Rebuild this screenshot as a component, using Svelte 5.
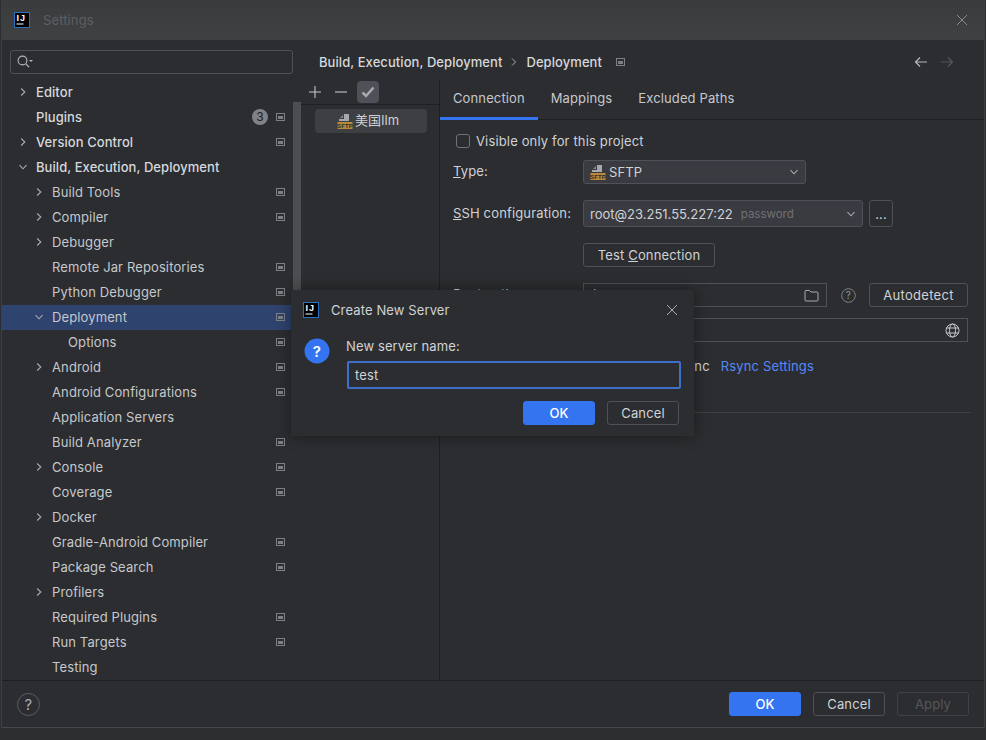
<script lang="ts">
  type Row = { label: string; level: number; arrow?: "right" | "down"; box?: boolean; strong?: boolean; badge?: string; selected?: boolean };

  const rows: Row[] = [
    { label: "Editor", level: 0, arrow: "right", strong: true },
    { label: "Plugins", level: 0, box: true, strong: true, badge: "3" },
    { label: "Version Control", level: 0, arrow: "right", box: true, strong: true },
    { label: "Build, Execution, Deployment", level: 0, arrow: "down", strong: true },
    { label: "Build Tools", level: 1, arrow: "right", box: true },
    { label: "Compiler", level: 1, arrow: "right", box: true },
    { label: "Debugger", level: 1, arrow: "right" },
    { label: "Remote Jar Repositories", level: 1, box: true },
    { label: "Python Debugger", level: 1, box: true },
    { label: "Deployment", level: 1, arrow: "down", box: true, selected: true },
    { label: "Options", level: 2, box: true },
    { label: "Android", level: 1, arrow: "right", box: true },
    { label: "Android Configurations", level: 1, box: true },
    { label: "Application Servers", level: 1 },
    { label: "Build Analyzer", level: 1, box: true },
    { label: "Console", level: 1, arrow: "right", box: true },
    { label: "Coverage", level: 1, box: true },
    { label: "Docker", level: 1, arrow: "right" },
    { label: "Gradle-Android Compiler", level: 1, box: true },
    { label: "Package Search", level: 1, box: true },
    { label: "Profilers", level: 1, arrow: "right" },
    { label: "Required Plugins", level: 1, box: true },
    { label: "Run Targets", level: 1, box: true },
    { label: "Testing", level: 1 }
  ];
  const tabs = ["Connection", "Mappings", "Excluded Paths"];
</script>

{#snippet logo()}
  <svg class="logo" width="16" height="16" viewBox="0 0 16 16">
    <rect x="0.5" y="0.5" width="15" height="15" fill="#000" stroke="#2f6fbf" />
    <text x="2.500" y="9" font-size="9" font-weight="700" letter-spacing="1" fill="#fff" font-family="Liberation Sans, sans-serif">IJ</text>
    <rect x="2.500" y="11.500" width="7" height="1" fill="#fff" />
  </svg>
{/snippet}

{#snippet boxIcon()}
  <svg class="box" width="9" height="8" viewBox="0 0 9 8">
    <rect x="0.5" y="0.5" width="8" height="7" fill="none" stroke="#7d8085" />
    <rect x="2" y="3" width="5" height="3" fill="#7d8085" />
  </svg>
{/snippet}

{#snippet chevron(dir: string)}
  <svg class="chev" width="10" height="10" viewBox="0 0 10 10">
    {#if dir === "down"}
      <path d="M1.5 3.2 5 6.8l3.5-3.6" fill="none" stroke="#a8abb0" stroke-width="1.1" />
    {:else}
      <path d="M3.2 1.5 6.8 5 3.2 8.5" fill="none" stroke="#a8abb0" stroke-width="1.1" />
    {/if}
  </svg>
{/snippet}

{#snippet sftp()}
  <svg width="16" height="16" viewBox="0 0 16 16" class="sftp">
    <path d="M7 1h5v7H2V6h5z" fill="#a6a8ac" />
    <path d="M3 5l3-3v3z" fill="#85878b" />
    <rect x="0.5" y="9" width="15" height="7" fill="#b98a3a" />
    <text x="8" y="15" font-size="6" font-weight="700" text-anchor="middle" fill="#2b2d30" font-family="Liberation Sans, sans-serif">SFTP</text>
  </svg>
{/snippet}

{#snippet close(color: string)}
  <svg width="12" height="12" viewBox="0 0 12 12">
    <path d="M1 1l10 10M11 1 1 11" stroke={color} stroke-width="1" fill="none" />
  </svg>
{/snippet}

<div class="window">
  <header class="titlebar">
    <div class="titlebar-left">
      {@render logo()}
      <span class="title">Settings</span>
    </div>
    {@render close("#8a8c90")}
  </header>

  <div class="body">
    <aside class="side">
      <div class="search">
        <svg width="16" height="14" viewBox="0 0 16 14">
          <circle cx="5.5" cy="5.5" r="4.4" fill="none" stroke="#b4b7bb" stroke-width="1.1" />
          <path d="M8.8 8.8 12 12" stroke="#b4b7bb" stroke-width="1.2" />
          <path d="M12 5h4l-2 2z" fill="#b4b7bb" />
        </svg>
      </div>
      <div class="tree">
        {#each rows as row}
          <div class={`row level-${row.level}`} class:selected={row.selected}>
            <span class="arrow">
              {#if row.arrow}{@render chevron(row.arrow)}{/if}
            </span>
            <span class="label" class:strong={row.strong}>{row.label}</span>
            <span class="row-end">
              {#if row.badge}<span class="badge">{row.badge}</span>{/if}
              {#if row.box}{@render boxIcon()}{/if}
            </span>
          </div>
        {/each}
      </div>
    </aside>
    <div class="scrollbar"></div>

    <main class="main">
      <div class="crumbs">
        <span>Build, Execution, Deployment</span>
        <svg width="8" height="10" viewBox="0 0 8 10"><path d="M2 1.5 5.5 5 2 8.5" fill="none" stroke="#a8abb0" /></svg>
        <span>Deployment</span>
        <span class="crumb-box">{@render boxIcon()}</span>
        <span class="nav">
          <svg width="14" height="12" viewBox="0 0 14 12"><path d="M13 6H1.5M6 1.5 1.5 6 6 10.5" fill="none" stroke="#b4b7bb" stroke-width="1.2" /></svg>
          <svg width="14" height="12" viewBox="0 0 14 12"><path d="M1 6h11.5M8 1.5 12.500 6 8 10.500" fill="none" stroke="#55575b" stroke-width="1.200" /></svg>
        </span>
      </div>

      <div class="panels">
        <section class="servers">
          <div class="tools">
            <svg width="14" height="14" viewBox="0 0 14 14"><path d="M7 1v12M1 7h12" stroke="#c4c7cb" stroke-width="1.1" /></svg>
            <svg width="14" height="14" viewBox="0 0 14 14"><path d="M1 7h12" stroke="#c4c7cb" stroke-width="1.1" /></svg>
            <span class="check">
              <svg width="14" height="12" viewBox="0 0 14 12"><path d="M1.500 6.500 5 10l7.500-8.500" fill="none" stroke="#a9abaf" stroke-width="2.500" /></svg>
            </span>
          </div>
          <div class="server-item">
            {@render sftp()}
            <span class="server-name">美国llm</span>
          </div>
        </section>

        <section class="config">
          <div class="tabs">
            {#each tabs as tab, i}
              <div class="tab" class:active={i === 0}>{tab}</div>
            {/each}
          </div>

          <div class="form">
            <label class="visible">
              <span class="checkbox"></span>
              Visible only for this project
            </label>

            <div class="field type-row">
              <span class="field-label"><u>T</u>ype:</span>
              <div class="combo type-combo">
                {@render sftp()}
                <span>SFTP</span>
                <span class="combo-arrow">{@render chevron("down")}</span>
              </div>
            </div>

            <div class="field ssh-row">
              <span class="field-label"><u>S</u>SH configuration:</span>
              <div class="combo ssh-combo">
                <span>root@23.251.55.227:22</span>
                <span class="muted">password</span>
                <span class="combo-arrow">{@render chevron("down")}</span>
              </div>
              <button class="btn dots">...</button>
            </div>

            <div class="field test-row">
              <span class="field-label"></span>
              <button class="btn test">Test <u>C</u>onnection</button>
            </div>

            <div class="field root-row">
              <span class="field-label">Root path:</span>
              <div class="input root-input">
                <span class="root-value">/</span>
                <svg class="end-icon" width="15" height="13" viewBox="0 0 15 13"><path d="M1 2.500A1 1 0 0 1 2 1.500h3.500L7 3h6a1 1 0 0 1 1 1v7a1 1 0 0 1-1 1H2a1 1 0 0 1-1-1z" fill="none" stroke="#a8abb0" /></svg>
              </div>
              <svg class="help" width="15" height="15" viewBox="0 0 15 15">
                <circle cx="7.500" cy="7.500" r="6.800" fill="none" stroke="#7f8286" />
                <text x="7.500" y="11" font-size="10" text-anchor="middle" fill="#8f9296" font-family="Inter, sans-serif">?</text>
              </svg>
              <button class="btn detect">Autodetect</button>
            </div>

            <div class="field web-row">
              <span class="field-label">Web server URL:</span>
              <div class="input web-input">
                <span>http:///</span>
                <svg class="end-icon" width="15" height="15" viewBox="0 0 15 15" fill="none" stroke="#c4c7cb">
                  <circle cx="7.500" cy="7.500" r="6.500" />
                  <ellipse cx="7.500" cy="7.500" rx="3" ry="6.500" />
                  <path d="M1.500 5h12M1.500 10h12" />
                </svg>
              </div>
            </div>

            <div class="rsync">
              <span class="rsync-text">Use Rsync for download/upload/sync</span>
              <span class="link">Rsync Settings</span>
            </div>

            <div class="rule"></div>
          </div>
        </section>
      </div>
    </main>
  </div>

  <footer class="footer">
    <span class="round-help">?</span>
    <div class="footer-btns">
      <button class="btn primary">OK</button>
      <button class="btn">Cancel</button>
      <button class="btn off">Apply</button>
    </div>
  </footer>
</div>

<div class="dialog">
  <div class="dialog-title">
    {@render logo()}
    <span>Create New Server</span>
    <span class="dialog-close">{@render close("#a8abb0")}</span>
  </div>
  <div class="dialog-body">
    <svg class="question" width="26" height="26" viewBox="0 0 26 26">
      <circle cx="13" cy="13" r="12.500" fill="#3574f0" />
      <text x="13" y="18.500" font-size="15" font-weight="600" text-anchor="middle" fill="#fff" font-family="Inter, sans-serif">?</text>
    </svg>
    <div class="dialog-fields">
      <div class="dialog-label">New server name:</div>
      <div class="dialog-input">test</div>
    </div>
  </div>
  <div class="dialog-btns">
    <button class="btn primary">OK</button>
    <button class="btn">Cancel</button>
  </div>
</div>

<style>
  :global(body) {
    margin: 0;
    background: #2d2e30;
    overflow: hidden;
  }

  .window,
  .dialog {
    font-family: Inter, "Noto Sans CJK SC", sans-serif;
    font-size: 13px;
    letter-spacing: 0.12px;
    color: #d0d2d6;
  }

  .window {
    box-sizing: border-box;
    margin-left: 1px;
    width: 984px;
    height: 728px;
    display: flex;
    flex-direction: column;
    background: #2b2d30;
    border-left: 1px solid #3d3f42;
    border-right: 1px solid #3d3f42;
    border-bottom: 1px solid #46484b;
  }

  .titlebar {
    height: 40px;
    flex: none;
    display: flex;
    align-items: center;
    justify-content: space-between;
    padding: 0 16px 0 12px;
    background: linear-gradient(#3a3b3d, #404143);
  }
  .titlebar-left {
    display: flex;
    align-items: center;
    gap: 13px;
  }
  .title {
    color: #5d5f63;
    font-size: 13px;
  }
  .logo {
    display: block;
    flex: none;
  }

  .body {
    flex: 1;
    min-height: 0;
    display: flex;
  }
  .side {
    width: 291px;
    flex: none;
    display: flex;
    flex-direction: column;
    overflow: hidden;
  }
  .search {
    box-sizing: border-box;
    margin: 10px 0 6px 8px;
    width: 283px;
    height: 24px;
    flex: none;
    border: 1px solid #4e5157;
    border-radius: 3px;
    display: flex;
    align-items: center;
    padding-left: 6px;
  }
  .row {
    box-sizing: border-box;
    height: 25px;
    padding-bottom: 2px;
    display: flex;
    align-items: center;
    color: #c6c8cc;
  }
  .row.selected {
    background: #2e436e;
  }
  .level-0 { padding-left: 16px; }
  .level-1 { padding-left: 32px; }
  .level-2 { padding-left: 48px; }
  .arrow {
    width: 18px;
    flex: none;
    display: flex;
  }
  .chev {
    display: block;
  }
  .label {
    flex: 1;
    white-space: nowrap;
  }
  .label.strong {
    font-weight: 500;
    letter-spacing: 0.07px;
    color: #d6d8dc;
  }
  .row-end {
    display: flex;
    align-items: center;
    gap: 8px;
    padding-right: 8px;
  }
  .box {
    display: block;
  }
  .badge {
    width: 16px;
    height: 16px;
    border-radius: 50%;
    background: #7f8286;
    color: #202124;
    font-size: 12px;
    display: flex;
    align-items: center;
    justify-content: center;
  }
  .scrollbar {
    width: 8px;
    height: 230px;
    flex: none;
    margin-top: 62px;
    background: #4c4e51;
  }

  .main {
    flex: 1;
    min-width: 0;
    display: flex;
    flex-direction: column;
  }
  .crumbs {
    height: 39px;
    flex: none;
    display: flex;
    align-items: center;
    gap: 8px;
    padding: 5px 30px 0 18px;
    box-sizing: border-box;
    font-weight: 500;
    letter-spacing: 0.07px;
    color: #d6d8dc;
  }
  .crumb-box {
    margin-left: 6px;
  }
  .nav {
    margin-left: auto;
    display: flex;
    gap: 12px;
  }

  .panels {
    flex: 1;
    min-height: 0;
    display: flex;
  }
  .servers {
    width: 138px;
    flex: none;
    border-right: 1px solid #1e1f22;
  }
  .tools {
    height: 25px;
    display: flex;
    align-items: center;
    gap: 12px;
    padding-left: 7px;
    border-bottom: 1px solid #1e1f22;
  }
  .check {
    width: 22px;
    height: 22px;
    margin-left: -3px;
    border-radius: 4px;
    background: #4e5157;
    display: flex;
    align-items: center;
    justify-content: center;
  }
  .server-item {
    margin: 4px 12px 0 14px;
    height: 24px;
    padding-left: 22px;
    border-radius: 4px;
    background: #3d3f43;
    display: flex;
    align-items: center;
    gap: 2px;
  }
  .server-name {
    line-height: 1;
    padding-bottom: 1px;
  }
  .sftp {
    display: block;
    flex: none;
  }

  .config {
    flex: 1;
    min-width: 0;
  }
  .tabs {
    height: 40px;
    display: flex;
    border-bottom: 1px solid #1e1f22;
  }
  .tab {
    padding: 0 13px;
    line-height: 38px;
    color: #c6c8cc;
  }
  .tab.active {
    border-bottom: 3px solid #3574f0;
    height: 38px;
  }

  .form {
    padding: 13px 13px 0;
    letter-spacing: 0.15px;
  }
  .visible {
    display: flex;
    align-items: center;
    gap: 6px;
    padding-left: 3px;
    height: 16px;
  }
  .checkbox {
    box-sizing: border-box;
    width: 14px;
    height: 14px;
    border: 1px solid #6f7276;
    border-radius: 3px;
  }
  .field {
    display: flex;
    align-items: center;
  }
  .field-label {
    width: 130px;
    flex: none;
    white-space: nowrap;
    padding-bottom: 2px;
  }
  .root-value {
    padding-bottom: 2px;
  }
  .type-row { margin-top: 11px; }
  .ssh-row { margin-top: 16px; }
  .test-row { margin-top: 16px; }
  .root-row { margin-top: 16px; }
  .web-row { margin-top: 11px; }

  .combo {
    box-sizing: border-box;
    display: flex;
    align-items: center;
    gap: 3px;
    padding-left: 6px;
    background: #393b40;
    border: 1px solid #4e5157;
    border-radius: 3px;
  }
  .type-combo {
    width: 223px;
    height: 24px;
  }
  .ssh-combo {
    width: 280px;
    height: 27px;
    gap: 8px;
    letter-spacing: 0;
  }
  .muted {
    color: #6f7276;
    font-size: 11.500px;
  }
  .combo-arrow {
    margin-left: auto;
    margin-right: 6px;
  }
  .btn {
    box-sizing: border-box;
    height: 24px;
    width: 72px;
    padding: 0;
    font: inherit;
    letter-spacing: inherit;
    color: #d0d2d6;
    background: transparent;
    border: 1px solid #4e5157;
    border-radius: 3px;
  }
  .dots {
    width: 24px;
    height: 27px;
    margin-left: 6px;
  }
  .test {
    width: 132px;
  }
  .detect {
    width: 99px;
    margin-left: 13px;
    letter-spacing: 0.3px;
  }
  .primary {
    background: #3574f0;
    border-color: #3574f0;
    color: #fff;
    font-weight: 500;
  }
  .off {
    color: #55575b;
    border-color: #3f4144;
  }
  .input {
    box-sizing: border-box;
    height: 24px;
    display: flex;
    align-items: center;
    justify-content: space-between;
    padding: 0 7px;
    border: 1px solid #4e5157;
  }
  .root-input {
    width: 244px;
  }
  .web-input {
    width: 385px;
  }
  .help {
    margin-left: 14px;
    flex: none;
  }
  .end-icon {
    flex: none;
  }
  .rsync {
    margin-top: 15px;
    height: 17px;
    display: flex;
    align-items: center;
    gap: 11px;
    padding-left: 21px;
    white-space: nowrap;
  }
  .link {
    color: #548af7;
  }
  .rule {
    height: 1px;
    margin: 38px 0 0 -13px;
    width: 531px;
    background: #3d3f42;
  }

  .footer {
    height: 47px;
    flex: none;
    box-sizing: border-box;
    border-top: 1px solid #1e1f22;
    display: flex;
    align-items: center;
    justify-content: space-between;
    padding: 0 15px;
  }
  .round-help {
    box-sizing: border-box;
    width: 23px;
    height: 23px;
    border: 1px solid #5c5e62;
    border-radius: 50%;
    display: flex;
    align-items: center;
    justify-content: center;
    color: #a8abb0;
    font-size: 15px;
  }
  .footer-btns {
    display: flex;
    gap: 12px;
  }

  .dialog {
    position: absolute;
    left: 291px;
    top: 290px;
    width: 403px;
    height: 146px;
    background: #2b2d30;
    box-shadow: 0 0 14px rgba(0, 0, 0, 0.4);
  }
  .dialog-title {
    height: 40px;
    display: flex;
    align-items: center;
    gap: 12px;
    padding-left: 12px;
  }
  .dialog-close {
    margin-left: auto;
    margin-right: 16px;
    display: flex;
  }
  .dialog-body {
    display: flex;
    gap: 16px;
    padding: 8px 13px 0 13px;
  }
  .question {
    flex: none;
  }
  .dialog-fields {
    flex: 1;
  }
  .dialog-label {
    height: 16px;
    line-height: 16px;
  }
  .dialog-input {
    box-sizing: border-box;
    margin-top: 7px;
    height: 28px;
    margin-left: 1px;
    border: 2px solid #3f70c9;
    border-radius: 2px;
    padding-left: 6px;
    line-height: 24px;
  }
  .dialog-btns {
    display: flex;
    justify-content: flex-end;
    gap: 12px;
    margin-top: 12px;
    padding-right: 15px;
  }
</style>
